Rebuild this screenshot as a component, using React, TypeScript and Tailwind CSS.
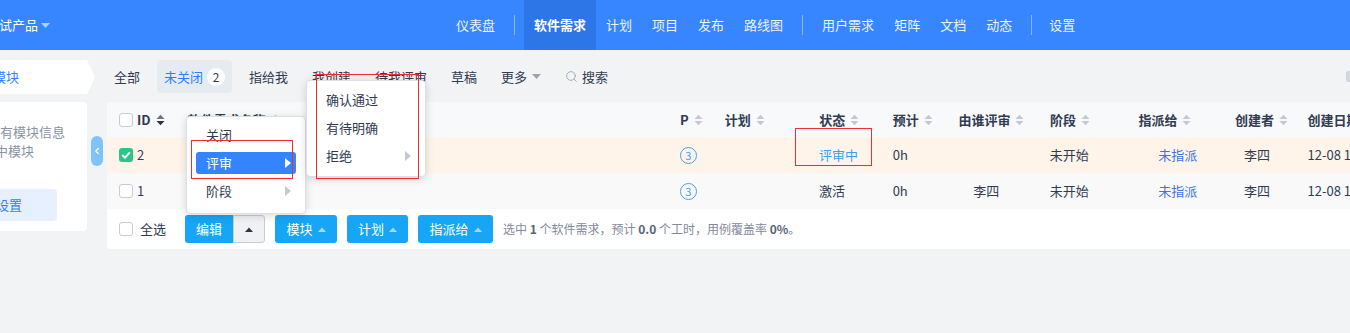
import React from "react";
import { Search, ChevronLeft } from "lucide-react";

const SortIcon = ({ dark }: { dark?: boolean }) => (
  <svg width="9" height="12" viewBox="0 0 9 12" className="ml-[5px] shrink-0">
    <path d="M0.5 5 L4.5 0.8 L8.5 5 Z" fill={dark ? "#6b7280" : "#c4c8d0"} />
    <path d="M0.5 7 L4.5 11.2 L8.5 7 Z" fill={dark ? "#2b3446" : "#c4c8d0"} />
  </svg>
);

const Checkbox = ({ checked }: { checked?: boolean }) =>
  checked ? (
    <span className="w-[14px] h-[14px] rounded-[3px] bg-[#2bc48a] flex items-center justify-center shrink-0">
      <svg width="10" height="8" viewBox="0 0 10 8">
        <path d="M1.2 4 L4 6.6 L8.8 1.4" stroke="white" strokeWidth="2" fill="none" />
      </svg>
    </span>
  ) : (
    <span className="w-[14px] h-[14px] rounded-[3px] border border-[#c9ccd3] bg-white shrink-0" />
  );

const UpCaret = ({ color }: { color: string }) => (
  <svg width="8" height="5" viewBox="0 0 8 5" className="shrink-0">
    <path d="M0 5 L4 0.5 L8 5 Z" fill={color} />
  </svg>
);

const DownCaret = ({ color }: { color: string }) => (
  <svg width="9" height="5" viewBox="0 0 9 5" className="shrink-0">
    <path d="M0 0 L4.5 5 L9 0 Z" fill={color} />
  </svg>
);

const RightArrow = ({ color }: { color: string }) => (
  <svg width="6" height="10" viewBox="0 0 6 10" className="shrink-0">
    <path d="M0 0 L6 5 L0 10 Z" fill={color} />
  </svg>
);

const PCircle = () => (
  <span className="w-[17px] h-[17px] rounded-full border border-[#3ea4f3] text-[#3ea4f3] text-[11px] leading-none flex items-center justify-center">
    3
  </span>
);

export default function App() {
  return (
    <div className="relative w-[1350px] h-[333px] overflow-hidden bg-[#f2f3f5] text-[13px] text-[#313c52] [font-family:'Noto_Sans_CJK_SC','Noto_Sans',sans-serif]">
      {/* Top nav */}
      <div className="h-[50px] bg-[#3785ff] flex items-center text-white">
        <div className="ml-[-14px] flex items-center whitespace-nowrap shrink-0">
          <span>测试产品</span>
          <span className="ml-[3px]">
            <DownCaret color="#b3cdfb" />
          </span>
        </div>
        <nav className="ml-[396px] flex h-full items-center whitespace-nowrap">
          <div className="px-[10px] h-full flex items-center text-white/90">仪表盘</div>
          <div className="w-px h-[20px] bg-white/40 mx-[9px]" />
          <div className="px-[10px] h-full flex items-center bg-[#2d76e8] font-bold">软件需求</div>
          <div className="px-[10px] h-full flex items-center text-white/90">计划</div>
          <div className="px-[10px] h-full flex items-center text-white/90">项目</div>
          <div className="px-[10px] h-full flex items-center text-white/90">发布</div>
          <div className="px-[10px] h-full flex items-center text-white/90">路线图</div>
          <div className="w-px h-[20px] bg-white/40 mx-[9px]" />
          <div className="px-[10px] h-full flex items-center text-white/90">用户需求</div>
          <div className="px-[10px] h-full flex items-center text-white/90">矩阵</div>
          <div className="px-[10px] h-full flex items-center text-white/90">文档</div>
          <div className="px-[10px] h-full flex items-center text-white/90">动态</div>
          <div className="w-px h-[20px] bg-white/40 mx-[9px]" />
          <div className="px-[8px] h-full flex items-center text-white/90">设置</div>
        </nav>
      </div>

      {/* Body */}
      <div className="flex pt-[10px]">
        {/* Left column */}
        <div className="w-[87px] shrink-0 flex flex-col">
          <div className="w-[95px] h-[34px] shrink-0 bg-white [clip-path:polygon(0_0,87px_0,95px_50%,87px_100%,0_100%)] flex items-center text-[#2e7fff]">
            <span className="ml-[-7px] whitespace-nowrap">模块</span>
          </div>
          <div className="mt-[8px] h-[129px] bg-white rounded-r-[4px] flex flex-col text-[#8a93a6]">
            <div className="mt-[20px] ml-[-13px] whitespace-nowrap leading-[19px]">没有模块信息</div>
            <div className="ml-[-5px] whitespace-nowrap leading-[19px]">中模块</div>
            <div className="mt-[29px] w-[57px] h-[32px] bg-[#e7f0ff] rounded-r-[4px] flex items-center text-[#2e7fff]">
              <span className="ml-[-4px] whitespace-nowrap">设置</span>
            </div>
          </div>
        </div>

        {/* Handle */}
        <div className="w-[12px] mx-[4px] shrink-0">
          <div className="mt-[76px] h-[30px] w-[12px] rounded-[6px] bg-[#7ec4fb] flex items-center justify-center">
            <ChevronLeft size={10} color="white" strokeWidth={3} />
          </div>
        </div>

        {/* Main column */}
        <div className="w-[1300px] shrink-0 flex flex-col">
          {/* Tabs */}
          <div className="w-[1249px] h-[33px] flex items-center gap-[10px] whitespace-nowrap">
            <div className="h-full px-[7px] flex items-center">全部</div>
            <div className="h-full px-[7px] flex items-center rounded-[4px] bg-[#e6ebf2] text-[#2e7fff]">
              未关闭
              <span className="ml-[4px] w-[18px] h-[18px] rounded-full bg-white text-[#313c52] text-[12px] flex items-center justify-center">2</span>
            </div>
            <div className="h-full px-[7px] flex items-center">指给我</div>
            <div className="h-full px-[7px] flex items-center">我创建</div>
            <div className="h-full px-[7px] flex items-center">待我评审</div>
            <div className="h-full px-[7px] flex items-center">草稿</div>
            <div className="h-full px-[7px] flex items-center">
              更多
              <span className="ml-[5px]">
                <DownCaret color="#9ca3af" />
              </span>
            </div>
            <div className="h-full px-[7px] flex items-center">
              <Search size={13} color="#9ca3af" strokeWidth={1.6} />
              <span className="ml-[4px]">搜索</span>
            </div>
            <div className="ml-auto w-[10px] h-[11px] rounded-[2px] bg-[#d3d6db]" />
          </div>

          {/* Card */}
          <div className="mt-[9px] bg-white rounded-[4px] overflow-hidden whitespace-nowrap">
            {/* Header */}
            <div className="flex items-center h-[35px] pl-[12px] bg-[#f8f9fa] font-bold">
              <div className="w-[69px] flex items-center">
                <Checkbox />
                <span className="ml-[4px]">ID</span>
                <SortIcon dark />
              </div>
              <div className="w-[495px] flex items-center">软件需求名称<SortIcon /></div>
              <div className="w-[45px] flex items-center">P<SortIcon /></div>
              <div className="w-[95px] flex items-center">计划<SortIcon /></div>
              <div className="w-[74px] flex items-center">状态<SortIcon /></div>
              <div className="w-[66px] flex items-center">预计<SortIcon /></div>
              <div className="w-[92px] flex items-center">由谁评审<SortIcon /></div>
              <div className="w-[89px] flex items-center">阶段<SortIcon /></div>
              <div className="w-[97px] flex items-center">指派给<SortIcon /></div>
              <div className="w-[73px] flex items-center">创建者<SortIcon /></div>
              <div className="w-[100px] flex items-center">创建日期<SortIcon /></div>
            </div>
            {/* Row 1 */}
            <div className="flex items-center h-[36px] pl-[12px] bg-[#fff4ea]">
              <div className="w-[69px] flex items-center">
                <Checkbox checked />
                <span className="ml-[4px]">2</span>
              </div>
              <div className="w-[495px]" />
              <div className="w-[45px] flex items-center"><PCircle /></div>
              <div className="w-[95px]" />
              <div className="w-[74px] text-[#3b9ff5]">评审中</div>
              <div className="w-[66px]">0h</div>
              <div className="w-[92px]" />
              <div className="w-[89px]">未开始</div>
              <div className="w-[97px] pl-[20px] text-[#3a74f0]">未指派</div>
              <div className="w-[73px] pl-[9px]">李四</div>
              <div className="w-[100px]">12-08 10:25</div>
            </div>
            {/* Row 2 */}
            <div className="flex items-center h-[36px] pl-[12px] bg-[#f9f9fa]">
              <div className="w-[69px] flex items-center">
                <Checkbox />
                <span className="ml-[4px]">1</span>
              </div>
              <div className="w-[495px]" />
              <div className="w-[45px] flex items-center"><PCircle /></div>
              <div className="w-[95px]" />
              <div className="w-[74px]">激活</div>
              <div className="w-[66px]">0h</div>
              <div className="w-[92px] pl-[15px]">李四</div>
              <div className="w-[89px]">未开始</div>
              <div className="w-[97px] pl-[20px] text-[#3a74f0]">未指派</div>
              <div className="w-[73px] pl-[9px]">李四</div>
              <div className="w-[100px]">12-08 10:23</div>
            </div>
            {/* Footer */}
            <div className="flex items-center h-[40px] pl-[12px] bg-white">
              <Checkbox />
              <span className="ml-[7px]">全选</span>
              <div className="ml-[19px] flex h-[28px]">
                <div className="w-[48px] bg-[#16a6f5] text-white rounded-l-[3px] flex items-center justify-center">编辑</div>
                <div className="w-[32px] bg-[#f0f1f4] border border-[#c8ccd3] rounded-r-[3px] flex items-center justify-center">
                  <UpCaret color="#2b3446" />
                </div>
              </div>
              <div className="ml-[10px] w-[62px] h-[28px] bg-[#16a6f5] text-white rounded-[3px] flex items-center justify-center gap-[5px]">
                模块<UpCaret color="#a6dcfb" />
              </div>
              <div className="ml-[10px] w-[61px] h-[28px] bg-[#16a6f5] text-white rounded-[3px] flex items-center justify-center gap-[5px]">
                计划<UpCaret color="#a6dcfb" />
              </div>
              <div className="ml-[10px] w-[75px] h-[28px] bg-[#16a6f5] text-white rounded-[3px] flex items-center justify-center gap-[5px]">
                指派给<UpCaret color="#a6dcfb" />
              </div>
              <div className="ml-[10px] text-[12px] text-[#838a9d]">
                选中 <b className="text-[#5b6275]">1</b> 个软件需求，预计 <b className="text-[#5b6275]">0.0</b> 个工时，用例覆盖率 <b className="text-[#5b6275]">0%</b>。
              </div>
            </div>
          </div>
        </div>
      </div>

      {/* Dropdown menu 1 */}
      <div className="absolute left-[186px] top-[116px] w-[120px] h-[98px] bg-white border border-[#dcdfe4] rounded-[4px] shadow-[0_2px_8px_rgba(0,0,0,0.15)] pt-[7px] px-[9px] flex flex-col gap-[6px]">
        <div className="h-[22px] pl-[10px] pr-[5px] flex items-center">关闭</div>
        <div className="h-[22px] pl-[10px] pr-[5px] flex items-center justify-between rounded-[3px] bg-[#3584ff] text-white">
          评审<RightArrow color="#ffffff" />
        </div>
        <div className="h-[22px] pl-[10px] pr-[5px] flex items-center justify-between">
          阶段<RightArrow color="#c4c8d0" />
        </div>
      </div>

      {/* Dropdown menu 2 */}
      <div className="absolute left-[306px] top-[80px] w-[120px] h-[97px] bg-white border border-[#dcdfe4] rounded-[4px] shadow-[0_2px_8px_rgba(0,0,0,0.15)] pt-[8px] px-[9px] flex flex-col gap-[6px]">
        <div className="h-[22px] pl-[10px] pr-[5px] flex items-center">确认通过</div>
        <div className="h-[22px] pl-[10px] pr-[5px] flex items-center">有待明确</div>
        <div className="h-[22px] pl-[10px] pr-[5px] flex items-center justify-between">
          拒绝<RightArrow color="#c4c8d0" />
        </div>
      </div>

      {/* Red annotation boxes */}
      <div className="absolute left-[191px] top-[140px] w-[102px] h-[39px] border border-[#ee2f2f]" />
      <div className="absolute left-[316px] top-[74px] w-[103px] h-[105px] border border-[#ee2f2f]" />
      <div className="absolute left-[795px] top-[128px] w-[77px] h-[38px] border border-[#ee2f2f]" />
    </div>
  );
}
